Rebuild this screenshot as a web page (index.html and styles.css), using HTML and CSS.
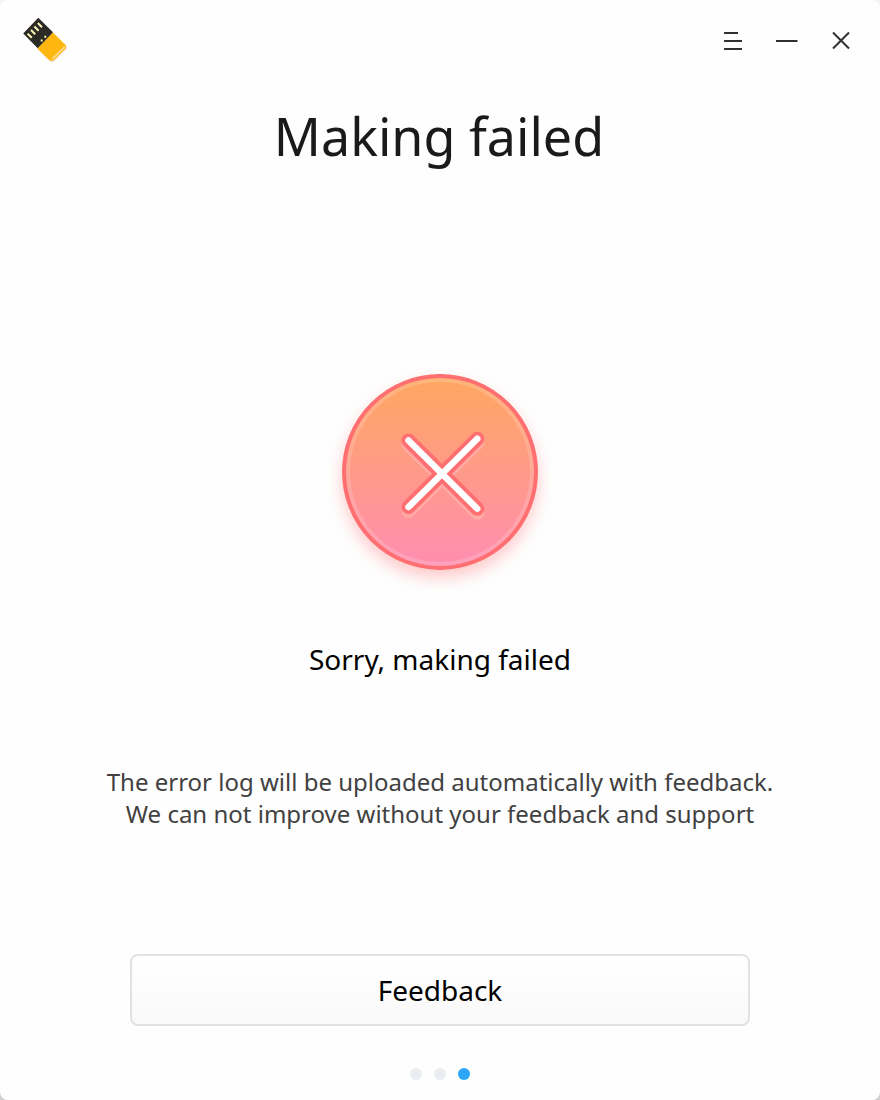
FILE: index.html
```html
<!DOCTYPE html>
<html lang="en">
<head>
<meta charset="utf-8">
<title>Making failed</title>
<link rel="stylesheet" href="styles.css">
</head>
<body>
<main class="window">
  <header class="titlebar">
    <svg class="logo" width="48" height="48" viewBox="20 16 48 48" aria-hidden="true">
      <path class="logo-shadow" d="M38 49.5 52.8 34l12.8 12.3q2 2 0 4L55 61q-3 2.400-6 0Z"/>
      <path class="logo-body" d="M37.300 48.500 52.700 32.300l12.600 12.500q2 2 0 4L54.300 59.700q-2.800 2.200-5.300 0Z"/>
      <path class="logo-plug" d="M23.200 33.500 38.300 17.800 53 32.200 37.700 48.300Z"/>
      <path class="logo-pins" d="M27.600 33.600l4.200 4.200M31 30l4.200 4.200M34.400 26.500l4.200 4.200M37.800 23l4.200 4.200"/>
      <path class="logo-holes" d="M40.700 40.500h2M44.300 36.700h2"/>
      <path class="logo-shine" d="M51.800 58.200q.8.400 1.600-.3L64 47.600q.5-.6.200-1.400"/>
    </svg>
    <nav class="controls">
      <svg width="22" height="22" viewBox="0 0 22 22"><path d="M2 3h14M2 11h18M2 19h18"/></svg>
      <svg width="22" height="22" viewBox="0 0 22 22"><path d="M0 11h21.500"/></svg>
      <svg width="22" height="22" viewBox="0 0 22 22"><path d="M3 2.500 19 18.500M19 2.500 3 18.500"/></svg>
    </nav>
  </header>
  <h1 class="title">Making failed</h1>
  <div class="status">
    <svg width="98" height="98" viewBox="391 423 98 98" aria-hidden="true">
      <path class="cross-glow" d="M408.500 444.500 477.300 512.700M477.300 442.700 408.500 511"/>
      <path class="cross-edge" d="M408.500 440.500 477.300 508.700M477.300 438.700 408.500 507"/>
      <path class="cross" d="M408.500 440.500 477.300 508.700M477.300 438.700 408.500 507"/>
    </svg>
  </div>
  <p class="message">Sorry, making failed</p>
  <p class="hint">The error log will be uploaded automatically with feedback.<br>We can not improve without your feedback and support</p>
  <button class="feedback">Feedback</button>
  <div class="steps">
    <span class="dot"></span><span class="dot"></span><span class="dot active"></span>
  </div>
</main>
</body>
</html>
```
FILE: styles.css
```css
* { box-sizing: border-box; }
body {
  margin: 0;
  background: linear-gradient(#f4f4f4 50%, #d0d0d0 50%);
  font-family: "Noto Sans", sans-serif;
}
.window {
  width: 880px; height: 1100px;
  display: flex; flex-direction: column; align-items: center;
  background: #fefefe; border-radius: 8px;
  overflow: hidden;
}
.titlebar {
  width: 100%; height: 80px; padding: 0 28px 0 20px;
  display: flex; align-items: center; justify-content: space-between;
  flex: none;
}
.logo { display: block; }
.logo-shadow { fill: #f3e6d2; }
.logo-body { fill: #ffb70f; }
.logo-plug { fill: #2b2a24; }
.logo-pins { fill: none; stroke: #fff6b8; stroke-width: 2; }
.logo-holes { fill: none; stroke: #fff6b8; stroke-width: 2; }
.logo-shine { fill: none; stroke: #ffe09a; stroke-width: 1.5; }
.controls { display: flex; gap: 32px; padding-top: 2px; }
.controls svg { display: block; fill: none; stroke: #303030; stroke-width: 2; }
.title {
  margin: 20px 2px 0 0; font-size: 52px; line-height: 72px;
  font-weight: 400; color: #1a1a1a;
}
.status {
  width: 196px; height: 196px; margin-top: 202px;
  display: flex; align-items: center; justify-content: center;
  border: 4px solid #ff6e70; border-radius: 50%;
  background: linear-gradient(#ffa75f, #ff8db2) border-box;
  box-shadow: inset 0 0 0 4px rgba(255, 255, 255, .16), 0 8px 16px rgba(255, 110, 112, .36);
}
.status svg { display: block; }
.status path { fill: none; stroke-linecap: round; }
.status .cross-glow { stroke: #ffa8a4; stroke-width: 14; }
.status .cross-edge { stroke: #ff6e70; stroke-width: 14; }
.status .cross { stroke: #fff; stroke-width: 6.5; }
.message { margin: 69px 0 0; font-size: 28px; line-height: 40px; color: #000; }
.hint { margin: 87px 0 0; font-size: 24px; line-height: 32px; text-align: center; color: #414141; }
.feedback {
  width: 620px; height: 72px; margin: 124px 0 0; padding: 0;
  border: 2px solid #e2e2e2; border-radius: 8px;
  background: linear-gradient(#fff, #f9f9f9);
  font: 28px/40px "Noto Sans", sans-serif; color: #000;
}
.steps { display: flex; gap: 12px; margin-top: 42px; }
.dot { width: 12px; height: 12px; border-radius: 50%; background: #e9ecf1; }
.active { background: #2ca7f8; }
```
